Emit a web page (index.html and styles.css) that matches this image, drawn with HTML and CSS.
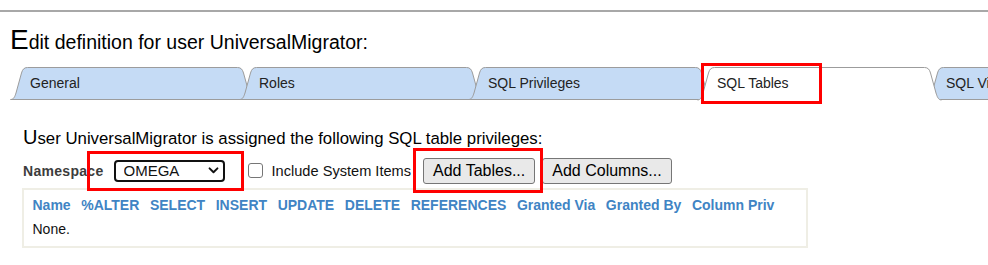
FILE: index.html
```html
<!DOCTYPE html>
<html lang="en">
<head>
  <meta charset="UTF-8" />
  <title>Edit User - SQL Tables</title>
  <link rel="stylesheet" href="styles.css">
</head>
<body>

  <div class="rule"></div>

  <h1 class="title"><span class="title-cap">E</span>dit definition for user UniversalMigrator:</h1>

  <!-- Tab strip -->
  <nav class="tabs">
    <a class="tab" href="#">
      <svg class="tab-bg" viewBox="0 0 245 33" preserveAspectRatio="none" aria-hidden="true">
        <path class="tab-fill" d="M0.5,32.5 C4,32.5 5,29 6,26 L11.5,6 C12.5,2.5 14,0.5 17.5,0.5 H227.5 C231,0.5 232.5,2.5 233.5,6 L239,26 C240,29 241,32.5 244.5,32.5 Z"/>
      </svg>
      <span class="tab-label">General</span>
    </a>
    <a class="tab" href="#">
      <svg class="tab-bg" viewBox="0 0 245 33" preserveAspectRatio="none" aria-hidden="true">
        <path class="tab-fill" d="M0.5,32.5 C4,32.5 5,29 6,26 L11.5,6 C12.5,2.5 14,0.5 17.5,0.5 H227.5 C231,0.5 232.5,2.5 233.5,6 L239,26 C240,29 241,32.5 244.5,32.5 Z"/>
      </svg>
      <span class="tab-label">Roles</span>
    </a>
    <a class="tab" href="#">
      <svg class="tab-bg" viewBox="0 0 245 33" preserveAspectRatio="none" aria-hidden="true">
        <path class="tab-fill" d="M0.5,32.5 C4,32.5 5,29 6,26 L11.5,6 C12.5,2.5 14,0.5 17.5,0.5 H227.5 C231,0.5 232.5,2.5 233.5,6 L239,26 C240,29 241,32.5 244.5,32.5 Z"/>
      </svg>
      <span class="tab-label">SQL Privileges</span>
    </a>
    <a class="tab active" href="#">
      <svg class="tab-bg" viewBox="0 0 245 33" preserveAspectRatio="none" aria-hidden="true">
        <path class="tab-fill" d="M0.5,33 C4,33 5,29 6,26 L11.5,6 C12.5,2.5 14,0.5 17.5,0.5 H227.5 C231,0.5 232.5,2.5 233.5,6 L239,26 C240,29 241,33 244.5,33 Z"/>
        <path class="tab-line" d="M0.5,33 C4,33 5,29 6,26 L11.5,6 C12.5,2.5 14,0.5 17.5,0.5 H227.5 C231,0.5 232.5,2.5 233.5,6 L239,26 C240,29 241,33 244.5,33"/>
      </svg>
      <span class="tab-label">SQL Tables</span>
    </a>
    <a class="tab" href="#">
      <svg class="tab-bg" viewBox="0 0 245 33" preserveAspectRatio="none" aria-hidden="true">
        <path class="tab-fill" d="M0.5,32.5 C4,32.5 5,29 6,26 L11.5,6 C12.5,2.5 14,0.5 17.5,0.5 H227.5 C231,0.5 232.5,2.5 233.5,6 L239,26 C240,29 241,32.5 244.5,32.5 Z"/>
      </svg>
      <span class="tab-label">SQL Views</span>
    </a>
  </nav>

  <section class="content">
    <p class="intro"><span class="intro-cap">U</span>ser UniversalMigrator is assigned the following SQL table privileges:</p>

    <div class="controls">
      <label class="ns-label" for="ns">Namespace</label>
      <span class="select-wrap">
        <select id="ns" class="ns-select">
          <option>OMEGA</option>
        </select>
        <svg class="chevron" viewBox="0 0 12 8" aria-hidden="true">
          <path d="M1.5,1.5 L6,6 L10.5,1.5"/>
        </svg>
      </span>
      <label class="check">
        <input type="checkbox" class="check-box">
        <span>Include System Items</span>
      </label>
      <span class="btn-mark">
        <button class="btn" type="button">Add Tables...</button>
      </span>
      <button class="btn" type="button">Add Columns...</button>
    </div>

    <!-- Privileges table -->
    <div class="priv-box">
      <table class="priv-table">
        <thead>
          <tr>
            <th>Name</th>
            <th>%ALTER</th>
            <th>SELECT</th>
            <th>INSERT</th>
            <th>UPDATE</th>
            <th>DELETE</th>
            <th>REFERENCES</th>
            <th>Granted Via</th>
            <th>Granted By</th>
            <th>Column Priv</th>
          </tr>
        </thead>
        <tbody>
          <tr>
            <td colspan="10">None.</td>
          </tr>
        </tbody>
      </table>
    </div>
  </section>

</body>
</html>
```

FILE: styles.css
```css
/* Reset */
*, *::before, *::after {
  margin: 0;
  padding: 0;
  box-sizing: border-box;
}

:root {
  --tab-fill: #c5dbf5;
  --tab-line: #9c9c9c;
  --mark: #ff0000;
  --head-blue: #4084c4;
}

html, body {
  height: 100%;
  overflow: hidden;
}

body {
  background: #fff;
  color: #000;
  font-family: 'Liberation Sans', Arial, sans-serif;
}

/* Top rule */
.rule {
  margin-top: 10px;
  border-top: 2px solid #a8a8a8;
}

/* Page title */
.title {
  margin: 13px 0 0 10px;
  font-size: 19.5px;
  font-weight: normal;
  line-height: 30px;
}

.title-cap {
  font-size: 28px;
}

/* Tabs */
.tabs {
  display: flex;
  margin: 9.5px 0 0 10px;
  height: 33px;
}

.tab {
  position: relative;
  flex: none;
  width: 245px;
  height: 33px;
  margin-right: -16px;
  color: #222;
  text-decoration: none;
  font-size: 14px;
}

.tab-bg {
  position: absolute;
  inset: 0;
  width: 100%;
  height: 100%;
  overflow: visible;
}

.tab-fill {
  fill: var(--tab-fill);
  stroke: var(--tab-line);
  stroke-width: 1;
}

.tab.active {
  z-index: 1;
}

.tab.active .tab-fill {
  fill: #fff;
  stroke: none;
}

.tab-line {
  fill: none;
  stroke: var(--tab-line);
  stroke-width: 1;
}

.tab-label {
  position: relative;
  display: block;
  padding-left: 20px;
  line-height: 33px;
}

/* red annotation round the active tab */
.tab.active::after {
  content: '';
  position: absolute;
  left: 4px;
  top: -4px;
  width: 121px;
  height: 41px;
  border: 3px solid var(--mark);
}

/* Content */
.content {
  padding-left: 23px;
}

.intro {
  margin-top: 27px;
  font-size: 16.8px;
  line-height: 20px;
}

.intro-cap {
  font-size: 20px;
}

.controls {
  display: flex;
  align-items: center;
  height: 26px;
  margin-top: 9px;
}

.ns-label {
  font-size: 14px;
  font-weight: bold;
  letter-spacing: 0.3px;
  color: #3c3c3c;
  margin-right: 10px;
}

.select-wrap {
  position: relative;
  display: flex;
  align-items: center;
}

.select-wrap::after {
  content: '';
  position: absolute;
  left: -27px;
  right: -19px;
  top: -9px;
  bottom: -9px;
  border: 3px solid var(--mark);
  pointer-events: none;
}

.ns-select {
  appearance: none;
  -webkit-appearance: none;
  width: 111px;
  height: 22px;
  padding: 0 0 0 8px;
  border: 2px solid #111;
  border-radius: 4px;
  background: #fff;
  color: #111;
  font-family: 'Liberation Sans', Arial, sans-serif;
  font-size: 15px;
  line-height: 18px;
}

.chevron {
  position: absolute;
  right: 6px;
  top: 7px;
  width: 11px;
  height: 7px;
  pointer-events: none;
}

.chevron path {
  fill: none;
  stroke: #111;
  stroke-width: 2.2;
  stroke-linecap: round;
  stroke-linejoin: round;
}

.check {
  display: flex;
  align-items: center;
  margin-left: 23px;
  font-size: 14.6px;
  color: #111;
}

.check-box {
  appearance: none;
  -webkit-appearance: none;
  width: 15px;
  height: 15px;
  margin: 0 9px 0 0;
  border: 1px solid #767676;
  border-radius: 3px;
  background: #fff;
}

.btn-mark {
  position: relative;
  display: flex;
  margin-left: 12px;
  margin-right: 7px;
}

.btn-mark::after {
  content: '';
  position: absolute;
  left: -10px;
  right: -8px;
  top: -10px;
  bottom: -9px;
  border: 3px solid var(--mark);
  pointer-events: none;
}

.btn {
  height: 26px;
  padding: 0 9px;
  border: 1px solid #767676;
  border-radius: 3px;
  background: #e9e9e9;
  color: #000;
  font-family: 'Liberation Sans', Arial, sans-serif;
  font-size: 16px;
}

/* Privileges table */
.priv-box {
  width: 786px;
  height: 60px;
  margin: 4px 0 0 -1px;
  padding: 3px 0 0 4px;
  border: 2px solid #efeee5;
}

.priv-table {
  border-collapse: collapse;
  font-size: 14px;
}

.priv-table th,
.priv-table td {
  padding: 0 5.3px;
  line-height: 24px;
  text-align: left;
  white-space: nowrap;
}

.priv-table td {
  padding-left: 4.5px;
  color: #111;
}

.priv-table th {
  color: var(--head-blue);
  font-weight: bold;
}

.priv-table th:first-child {
  padding-left: 4.5px;
}
```
